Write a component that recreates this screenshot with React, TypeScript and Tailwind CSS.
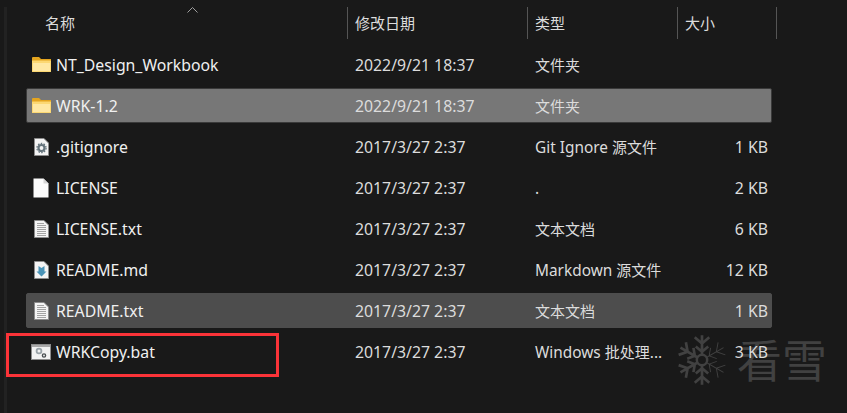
const font = { fontFamily: '"Noto Sans", "Noto Sans CJK SC", sans-serif' };
const cjk = { fontFamily: '"Noto Sans CJK SC", sans-serif' };

function FolderIcon() {
  return (
    <svg width="19" height="15" viewBox="0 0 19 15">
      <path d="M0 1.2 Q0 0 1 0 H7 L9 2 H19 V5 H0 Z" fill="#e5a51f" />
      <rect x="0" y="3.5" width="19" height="11.5" rx="0.5" fill="#fcd873" />
      <rect x="1" y="6" width="17" height="8" fill="#ffe8a3" />
    </svg>
  );
}

function PageIcon({ children }: { children?: React.ReactNode }) {
  return (
    <svg width="15" height="18" viewBox="0 0 15 18">
      <path d="M.5.5 H10 L14.5 5 V17.5 H.5 Z" fill="#f4f4f4" stroke="#8c8c8c" />
      {children}
    </svg>
  );
}

function GearIcon() {
  return (
    <PageIcon>
      <circle cx="7.5" cy="10" r="3" fill="none" stroke="#66757d" strokeWidth="2.2" />
      <circle cx="7.5" cy="10" r="4.6" fill="none" stroke="#66757d" strokeWidth="1.2" strokeDasharray="1.6 1.3" />
    </PageIcon>
  );
}

function BlankIcon() {
  return (
    <svg width="16" height="20" viewBox="0 0 16 20">
      <path d="M.5.5 H10.5 L15.5 5.5 V19.5 H.5 Z" fill="#fbfbfb" />
      <path d="M10.5.5 V5.5 H15.5" fill="#d5d5d5" />
    </svg>
  );
}

function TextIcon() {
  return (
    <PageIcon>
      <path d="M3 3.5H10M3 5.5H12M3 7.5H12M3 9.5H12M3 11.5H12M3 13.5H12M3 15.5H12" stroke="#a3a3a3" strokeWidth="1" />
    </PageIcon>
  );
}

function MarkdownIcon() {
  return (
    <PageIcon>
      <path d="M4.5 5 L7.5 7 L10.5 5 V10.5 H12.5 L7.5 15.5 L2.5 10.5 H4.5 Z" fill="#4a94b8" />
    </PageIcon>
  );
}

function BatIcon() {
  return (
    <svg width="20" height="16" viewBox="0 0 20 16">
      <rect x=".5" y=".5" width="19" height="15" fill="#f2f2f2" stroke="#8c8c8c" />
      <rect x="1" y="1" width="18" height="2" fill="#a8a8a8" />
      <circle cx="8" cy="7" r="2.4" fill="none" stroke="#9aa3a8" strokeWidth="1.8" />
      <circle cx="13" cy="11.5" r="1.6" fill="none" stroke="#4a4f52" strokeWidth="1.4" />
    </svg>
  );
}

const files = [
  { name: "NT_Design_Workbook", date: "2022/9/21 18:37", latin: "", type: "文件夹", size: "", icon: <FolderIcon />, bg: "" },
  { name: "WRK-1.2", date: "2022/9/21 18:37", latin: "", type: "文件夹", size: "", icon: <FolderIcon />, bg: "bg-[#777777] border-[#3a3a3a]" },
  { name: ".gitignore", date: "2017/3/27 2:37", latin: "Git Ignore ", type: "源文件", size: "1 KB", icon: <GearIcon />, bg: "" },
  { name: "LICENSE", date: "2017/3/27 2:37", latin: ".", type: "", size: "2 KB", icon: <BlankIcon />, bg: "" },
  { name: "LICENSE.txt", date: "2017/3/27 2:37", latin: "", type: "文本文档", size: "6 KB", icon: <TextIcon />, bg: "" },
  { name: "README.md", date: "2017/3/27 2:37", latin: "Markdown ", type: "源文件", size: "12 KB", icon: <MarkdownIcon />, bg: "" },
  { name: "README.txt", date: "2017/3/27 2:37", latin: "", type: "文本文档", size: "1 KB", icon: <TextIcon />, bg: "bg-[#4d4d4d] border-[#4d4d4d]" },
  { name: "WRKCopy.bat", date: "2017/3/27 2:37", latin: "Windows ", type: "批处理...", size: "3 KB", icon: <BatIcon />, bg: "" },
];

function Snowflake() {
  const arm = (w: number) => (
    <path d="M25 25 V1 M25 9 L18 3 M25 9 L32 3 M25 17 L19 12 M25 17 L31 12" fill="none" stroke="#414141" strokeWidth={w} />
  );
  return (
    <svg width="52" height="58" viewBox="0 -3 50 56">
      {[0, 60, 120, 180, 240, 300].map((a) => (
        <g key={a} transform={`rotate(${a} 25 25)`}>{arm(a === 60 || a === 120 ? 0.9 : 2.6)}</g>
      ))}
      <circle cx="25" cy="25" r="5" fill="#191919" stroke="#414141" strokeWidth="2.4" />
    </svg>
  );
}

export default function App() {
  return (
    <div className="relative w-[847px] h-[413px] overflow-hidden bg-[#191919] pl-[26px] text-[15.8px] text-[#f0f0f0]" style={font}>
      {/* left pane edge */}
      <div className="absolute left-[4px] top-[7px] bottom-0 w-[3px] bg-[#222222]" />

      {/* watermark */}
      <div className="absolute left-[676px] top-[331px] flex items-center gap-[9px] text-[#414141]">
        <Snowflake />
        <span className="mt-[-4px] text-[45px] leading-none" style={cjk}>看雪</span>
      </div>

      {/* sort arrow */}
      <svg className="absolute left-[187px] top-[7px]" width="11" height="6" viewBox="0 0 11 6">
        <path d="M.5 5.5 L5.5 .5 L10.5 5.5" fill="none" stroke="#a0a0a0" />
      </svg>

      {/* header */}
      <div className="relative flex h-[32px] mt-[7px] items-center text-[15px] text-[#dcdcdc]" style={cjk}>
        <div className="w-[321px] pl-[19px]">名称</div>
        <div className="w-[180px] h-full flex items-center border-l border-[#555555] pl-[7px]">修改日期</div>
        <div className="w-[150px] h-full flex items-center border-l border-[#555555] pl-[7px]">类型</div>
        <div className="w-[100px] h-full flex items-center border-x border-[#555555] pl-[7px]">大小</div>
      </div>

      {/* rows */}
      <div className="relative mt-[8px] flex w-[746px] flex-col gap-[6px]">
        {files.map((f) => (
          <div key={f.name} className={`flex h-[35px] items-center border rounded-[2px] ${f.bg || "border-transparent"}`}>
            <div className="flex w-[320px] items-center">
              <div className="flex w-[28px] justify-center">{f.icon}</div>
              <span className="ml-[1px] pt-[2px] whitespace-nowrap">{f.name}</span>
            </div>
            <div className="w-[180px] pl-[8px] pt-[2px] text-[#dcdcdc]">{f.date}</div>
            <div className="w-[150px] pl-[8px] pt-[2px] text-[15.4px] text-[#dcdcdc] whitespace-nowrap">
              {f.latin}
              <span className="text-[15px]" style={cjk}>{f.type}</span>
            </div>
            <div className="w-[91px] pt-[2px] text-right text-[#dcdcdc]">{f.size}</div>
          </div>
        ))}
      </div>

      {/* highlight box */}
      <div className="absolute left-[6px] top-[333px] h-[44px] w-[273px] border-[3px] border-[#fb3338]" />
    </div>
  );
}
